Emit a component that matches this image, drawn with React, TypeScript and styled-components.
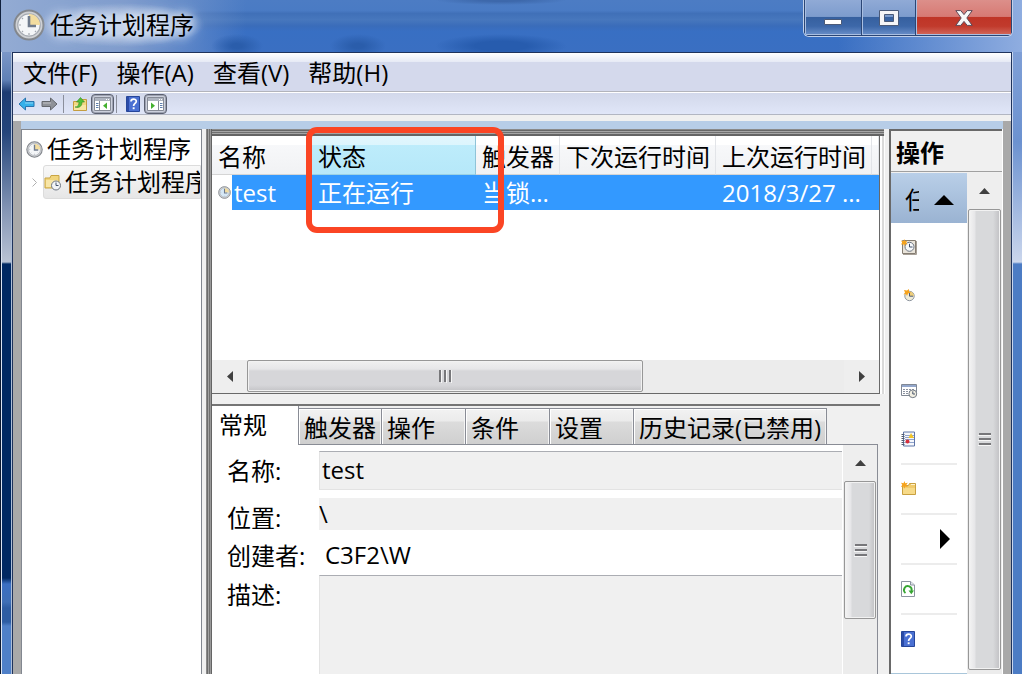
import React from "react";
import styled, { createGlobalStyle, css } from "styled-components";

const GlobalStyle = createGlobalStyle`
  * { box-sizing: border-box; }
  html, body { margin: 0; height: 100%; overflow: hidden; }
  body, button, input, textarea, table {
    font-family: "Open Sans", "Noto Sans CJK SC", sans-serif;
    font-size: 24px;
    line-height: 32px;
    color: #000;
  }
  button { border: 0; padding: 0; background: none; text-align: left; }
  svg { display: block; flex: none; }
`;

/* ---------- window frame ---------- */

const Window = styled.div`
  display: grid;
  grid-template: 52px 1fr / 12px 1fr 10px;
  height: 100vh;
  overflow: hidden;
  background: #4577c0;
`;

const TitleBar = styled.header`
  grid-column: 1 / -1;
  display: flex;
  justify-content: space-between;
  align-items: flex-start;
  padding: 0 9px 0 12px;
  border-left: 1px solid #10203c;
  background:
    radial-gradient(ellipse 84px 22px at 120px 25px, #b9c9e4 40%, transparent),
    radial-gradient(ellipse 26px 12px at 236px 46px, #2a5dab 20%, transparent),
    radial-gradient(ellipse 28px 12px at 357px 46px, #2a5dab 20%, transparent),
    radial-gradient(ellipse 66px 12px at 500px 46px, #275cae 40%, transparent),
    radial-gradient(ellipse 66px 5px at 500px 0, #3d68ab 30%, transparent),
    linear-gradient(90deg, transparent 82%, #8fade0 100%),
    linear-gradient(90deg, #93abd3 0, #7f9ccd 12%, transparent 24%),
    linear-gradient(#4c7cc4 0, #4a7bc4 20%, #4070b8 26%, #4777bd 38%, #3a6cba 50%, #386fc3 60%, #3a6fc2 100%);
`;

const Title = styled.h1`
  display: flex;
  align-items: center;
  gap: 5px;
  margin: 9px 0 0 0;
  height: 32px;
  font-size: 24px;
  font-weight: 400;
  text-shadow: 0 0 8px #dfe8f6, 0 0 12px #dfe8f6, 0 0 16px #c8d8f0;
`;

const Controls = styled.div`
  display: flex;
  height: 37px;
  border: 1px solid #c2d1ea;
  border-top: 0;
  border-radius: 0 0 6px 6px;
  box-shadow: inset 0 0 0 1px #203a68;
  overflow: hidden;
`;

const ControlButton = styled.button<{ $wide?: boolean; $close?: boolean }>`
  display: flex;
  justify-content: center;
  align-items: center;
  width: ${(p) => (p.$close ? 96 : p.$wide ? 58 : 54)}px;
  border: 1px solid #2b4676;
  border-top: 0;
  border-left: ${(p) => (p.$wide ? "1px solid #2b4676" : "0")};
  box-shadow: inset 1px -1px 0 #a9bfe2;
  background: ${(p) =>
    p.$close
      ? "linear-gradient(#dc8f8a 0, #d77a74 47%, #bf3527 50%, #c13a2c 75%, #d2695c 100%)"
      : "linear-gradient(#90aad6 0, #7d9ccd 47%, #36609f 50%, #3d68a9 75%, #6a8fc9 100%)"};
`;

const LeftEdge = styled.div`
  border-left: 1px solid #0b1830;
  box-shadow: inset 1px 0 0 #dbe4f2, inset -1px 0 0 #aebfd8;
  background: linear-gradient(#7b97c8 0, #5f80b5 28px, #1d3c72 40px, #24457b 80px, #8697b6 160px, #b9c3d4 210px,
    #002862 212px, #002862 526px, #3b6fc2 532px, #3f6fb6 550px, #2e5da3 556px, #2e5da3 570px, #4f80c8 574px);
`;

const RightEdge = styled.div`
  box-shadow: inset 1px 0 0 #c8d6ee;
  background: linear-gradient(#7f9fd6 0, #6c92d0 90px, #c9d5ec 208px, #d0daee 210px, #4c7cc4 212px);
`;

const Client = styled.main`
  display: flex;
  flex-direction: column;
  min-width: 0;
  min-height: 0;
  border: 1px solid #1f335c;
  border-bottom: 0;
  background: #f0f0f0;
`;

/* ---------- menu and toolbar ---------- */

const MenuBar = styled.nav`
  display: flex;
  gap: 19px;
  height: 39px;
  padding: 4px 10px 0;
  border-bottom: 1px solid #b2b4bb;
  background: linear-gradient(#fff 0, #e6eaf5 9px, #d4d9ec 9px);
`;

const MenuItem = styled.button`
  display: block;
  height: 32px;
  white-space: nowrap;
`;

const ToolBar = styled.div`
  display: flex;
  align-items: center;
  height: 23px;
  padding-left: 2px;
  border-top: 1px solid #fff;
  border-bottom: 1px solid #b2b6c2;
  background: linear-gradient(#d2d8ea, #e0e6f8);
`;

const ToolButton = styled.button<{ $pressed?: boolean }>`
  display: flex;
  align-items: center;
  justify-content: center;
  width: 23px;
  height: 20px;
  ${(p) =>
    p.$pressed &&
    css`
      border: 1px solid #5b6070;
      border-radius: 4px;
      background: #ccd0dc;
      box-shadow: inset 0 0 0 1px #9ea3b2;
    `}
`;

const ToolDivider = styled.span`
  width: 1px;
  height: 18px;
  margin: 0 4px 0 2px;
  background: #8b8f9b;
`;

/* ---------- body ---------- */

const Body = styled.div`
  flex: 1;
  min-height: 0;
  display: grid;
  grid-template: 8px 1fr / 181px 4px minmax(0, 1fr) 114px;
  margin-top: 6px;
  border: solid #a9a9a9;
  border-width: 0 8px;
`;

const BlueStrip = styled.div`
  grid-column: 1 / -1;
  background: #b7cde7;
`;

const TreePane = styled.aside`
  grid-column: 1;
  border: 1px solid #828790;
  border-bottom: 0;
  padding: 3px 0 0 4px;
  background: #fff;
  overflow: hidden;
`;

const TreeRoot = styled.div`
  display: flex;
  align-items: center;
  gap: 4px;
  height: 32px;
  white-space: nowrap;
`;

const TreeChild = styled.div`
  display: flex;
  align-items: center;
  height: 34px;
  white-space: nowrap;
`;

const Expander = styled.span`
  display: flex;
  justify-content: center;
  width: 17px;
`;

const TreeItem = styled.button`
  display: flex;
  align-items: center;
  gap: 4px;
  flex: none;
  width: 158px;
  height: 34px;
  border: 1px solid #dcdcdc;
  border-radius: 3px 0 0 3px;
  background: linear-gradient(#f8f8f8, #e6e6e6);
  overflow: hidden;
  white-space: nowrap;
`;

const Center = styled.section`
  grid-column: 3;
  position: relative;
  display: flex;
  flex-direction: column;
  min-height: 0;
  padding-left: 6px;
  background: linear-gradient(90deg, #8a8a8a 1px, #6c6c6c 1px, #6c6c6c 2px, #a2a2a2 2px, #a2a2a2 3px, #707070 3px,
    #707070 4px, #999 4px, #999 5px, #646464 5px, #646464 6px, #f0f0f0 6px);
`;

const TopFrame = styled.div`
  flex: none;
  height: 7px;
  margin-right: 5px;
  background: linear-gradient(#8a8a8a 1px, #666 1px, #666 2px, #a5a5a5 2px, #a5a5a5 3px, #707070 3px, #707070 4px,
    #a5a5a5 4px, #a5a5a5 5px, #646464 5px);
`;

const ListPane = styled.div`
  flex: 0 0 258px;
  display: flex;
  flex-direction: column;
  margin-right: 9px;
  border: solid #696969;
  border-width: 0 1px 1px 0;
  background: #fff;
  box-shadow: 2px 0 0 #fff, 4px 0 0 #dadada, 5px 0 0 #fff;
`;

const TableArea = styled.div`
  flex: 1;
  overflow: hidden;
`;

const Table = styled.table`
  width: 100%;
  table-layout: fixed;
  border-collapse: separate;
  border-spacing: 0;
`;

const HeadCell = styled.th<{ $width?: number; $active?: boolean }>`
  width: ${(p) => (p.$width ? `${p.$width}px` : "auto")};
  height: 39px;
  padding: 4px 0 0 6px;
  font-weight: 400;
  text-align: left;
  white-space: nowrap;
  border-right: 1px solid ${(p) => (p.$active ? "#8fc4d8" : "#e2e4e8")};
  border-bottom: 1px solid ${(p) => (p.$active ? "#9bd2e4" : "#d5d5d5")};
  background: ${(p) =>
    p.$active
      ? "linear-gradient(#e2f6fd 0, #dcf5fd 9px, #bdecfb 9px, #b6e8f9 100%)"
      : "linear-gradient(#fff 0, #fff 9px, #f7f8fa 9px, #f1f2f4 100%)"};
`;

const Cell = styled.td`
  height: 35px;
  padding: 0 0 0 6px;
  color: #fff;
  white-space: nowrap;
  background: #3399ff;
`;

const NameCell = styled(Cell)`
  background: linear-gradient(90deg, #fff 20px, #3399ff 20px);
`;

const TaskName = styled.span`
  display: flex;
  align-items: center;
  gap: 3px;
`;

const HScroll = styled.div`
  display: flex;
  height: 33px;
  background: #ececec;
`;

const VScroll = styled.div<{ $width: number }>`
  flex: none;
  display: flex;
  flex-direction: column;
  width: ${(p) => p.$width}px;
  background: #ececec;
`;

const ScrollButton = styled.button<{ $end?: boolean; $size?: number }>`
  display: flex;
  align-items: center;
  justify-content: center;
  flex: 0 0 ${(p) => p.$size ?? 36}px;
  background: #eee;
  ${(p) => p.$end && "margin-left: auto;"}
`;

const HThumb = styled.div`
  display: flex;
  align-items: center;
  justify-content: center;
  width: 396px;
  margin-bottom: 1px;
  border: 1px solid #979797;
  border-radius: 2px;
  box-shadow: inset 0 0 0 1px #f2f2f2;
  background: linear-gradient(#f0f0f0 0, #e6e6e8 8px, #d6d6d9 10px, #d6d6d9 24px, #c4c4c7 100%);
`;

const VThumb = styled.div<{ $height?: number }>`
  display: flex;
  align-items: center;
  justify-content: center;
  flex: ${(p) => (p.$height ? `0 0 ${p.$height}px` : "1")};
  margin: 0 1px;
  border: 1px solid #979797;
  border-radius: 2px;
  box-shadow: inset 0 0 0 1px #f2f2f2;
  background: linear-gradient(90deg, #f4f4f4 0, #e6e6e8 6px, #d8d9db 7px, #d8d9db 24px, #c0c0c3 100%);
`;

const Highlight = styled.div`
  position: absolute;
  left: 100px;
  top: -2px;
  width: 198px;
  height: 106px;
  border: 6px solid #fb4524;
  border-radius: 11px;
  pointer-events: none;
`;

/* ---------- details ---------- */

const Details = styled.div`
  flex: 1;
  display: flex;
  flex-direction: column;
  min-height: 0;
  margin: 10px 9px 0 0;
  border-top: 2px solid #757575;
  background: #f0f0f0;
`;

const Tabs = styled.div`
  display: flex;
  align-items: flex-end;
  flex: none;
  height: 39px;
  margin-right: 2px;
  background: linear-gradient(#f0f0f0 38px, #898c95 38px);
`;

const Tab = styled.button<{ $width: number; $selected?: boolean }>`
  flex: 0 0 ${(p) => p.$width}px;
  height: 37px;
  padding: 2px 0 0 5px;
  white-space: nowrap;
  border: 1px solid #898c95;
  border-left-width: 0;
  box-shadow: inset 1px 1px 0 #fff, inset -1px 0 0 #f4f4f4;
  background: linear-gradient(#f2f2f2 0, #ebebeb 12px, #dcdcdc 13px, #cfcfcf 100%);
  ${(p) =>
    p.$selected &&
    css`
      height: 39px;
      padding: 0 0 2px 7px;
      border-width: 0 1px 0 0;
      box-shadow: none;
      background: #fff;
    `}
`;

const TabPanel = styled.div`
  flex: 1;
  display: flex;
  min-height: 0;
  margin-right: 2px;
  border-right: 1px solid #898c95;
  background: #fff;
`;

const Form = styled.div`
  flex: 1;
  min-width: 0;
  display: grid;
  grid-template: 39px 40px 45px 1fr / 92px minmax(0, 1fr);
  padding: 6px 1px 0 15px;
`;

const Label = styled.label<{ $top?: number }>`
  padding-top: ${(p) => p.$top ?? 4}px;
  white-space: nowrap;
`;

const field = css`
  width: 100%;
  min-width: 0;
  border: 0;
  border-radius: 0;
  outline: 0;
  background: #f0f0f0;
`;

const Input = styled.input<{ $kind: "boxed" | "flat" | "plain" }>`
  ${field}
  ${(p) =>
    p.$kind === "boxed" &&
    css`
      padding: 0 2px 2px;
      border: 1px solid #e3e3e3;
      border-top-color: #abadb3;
      border-right: 0;
    `}
  ${(p) =>
    p.$kind === "flat" &&
    css`
      height: 32px;
      margin-top: 8px;
      padding: 0;
    `}
  ${(p) =>
    p.$kind === "plain" &&
    css`
      height: 44px;
      padding: 4px 6px 0;
      background: #fff;
    `}
`;

const TextArea = styled.textarea`
  ${field}
  display: block;
  height: 100%;
  resize: none;
  border-top: 1px solid #abadb3;
  border-left: 1px solid #e3e3e3;
`;

/* ---------- actions ---------- */

const Actions = styled.aside`
  grid-column: 4;
  display: flex;
  flex-direction: column;
  min-height: 0;
  margin-right: 1px;
  border: solid #696969;
  border-width: 2px 0 0 2px;
  box-shadow: 1px 0 0 #fff;
`;

const ActionsTitle = styled.h2`
  flex: none;
  margin: 0;
  height: 41px;
  padding: 6px 0 0 5px;
  border-bottom: 1px solid #a0a0a0;
  font-size: 24px;
  font-weight: 700;
`;

const ActionsBody = styled.div`
  flex: 1;
  display: flex;
  min-height: 0;
  padding-top: 1px;
`;

const ActionList = styled.div`
  flex: 1;
  min-width: 0;
  overflow: hidden;
  background: #fff;
`;

const ActionGroup = styled.button`
  display: flex;
  align-items: center;
  justify-content: space-between;
  width: 100%;
  height: 50px;
  padding: 4px 13px 0 14px;
  background: linear-gradient(#b9cfe8, #9ab3d2);
`;

const ClippedText = styled.span`
  width: 14px;
  overflow: hidden;
  white-space: nowrap;
`;

const Action = styled.button<{ $end?: boolean }>`
  display: flex;
  align-items: center;
  justify-content: ${(p) => (p.$end ? "flex-end" : "flex-start")};
  width: 100%;
  height: 48px;
  padding: 0 17px 0 10px;
`;

const ActionDivider = styled.hr`
  height: 2px;
  margin: 0 10px;
  border: 0;
  background: #ececec;
`;

const NextGroup = styled.div`
  height: 12px;
  margin-top: 10px;
  background: #a9c6da;
`;

/* ---------- drawings ---------- */

const Clock = ({ size, face = "#f4f6f8" }: { size: number; face?: string }) => (
  <svg width={size} height={size} viewBox="0 0 32 32">
    <circle cx="16" cy="16" r="14.5" fill="#cfd1d4" stroke="#83878d" strokeWidth="2" />
    <circle cx="16" cy="16" r="11.2" fill={face} stroke="#a3a8b0" strokeWidth="1.2" />
    <path d="M16 16V5a11 11 0 0 1 11 11z" fill="#f3dda0" />
    <path d="M16 7v10h7" fill="none" stroke="#6f7b8d" strokeWidth="2.600" />
    <path d="M16 26v-2M6 16h2M9 9l1 1M9 23l1-1M23 23l-1-1" stroke="#a3a8b0" strokeWidth="1.200" />
  </svg>
);

const Arrow = ({ fill, edge, flip }: { fill: string; edge: string; flip?: boolean }) => (
  <svg width="17" height="14" viewBox="0 0 17 14">
    <path
      d={flip ? "M16 7 9.500 1v3.500H1v5h8.500V13z" : "M1 7l6.500-6v3.500H16v5H7.500V13z"}
      fill={fill}
      stroke={edge}
      strokeLinejoin="round"
    />
    <path d={flip ? "M2 6h8" : "M7 6h8"} stroke="#fff" strokeOpacity=".45" />
  </svg>
);

const UpFolder = () => (
  <svg width="16" height="16" viewBox="0 0 16 16">
    <path d="M1.500 5.500h5l1-2h7v11h-13z" fill="#f3d883" stroke="#c49d3f" />
    <path d="M2 9h12v5H2z" fill="#f8e6a5" />
    <path d="M3 11c3 0 4-2 4-5H4.500L8.500 1.500 12.500 6H10c0 4-2.500 6.500-7 5z" fill="#55bf38" stroke="#2f8a22" strokeWidth=".6" />
  </svg>
);

const PaneIcon = ({ right }: { right?: boolean }) => (
  <svg width="17" height="14" viewBox="0 0 17 14">
    <path d="M.5.5h16v13H.5z" fill="#fff" stroke="#868b96" />
    <path d="M1 1h15v3H1z" fill="#aeb4c0" />
    <path d="M12 2.500h1M14 2.500h1" stroke="#fff" />
    <path d={right ? "M11.500 4v9" : "M5.500 4v9"} stroke="#868b96" />
    <path d={right ? "M13 6.500h2.500M13 8.500h2.500M13 10.500h2.500" : "M2 6.500h2.500M2 8.500h2.500M2 10.500h2.500"} stroke="#5e7fae" />
    <path d={right ? "M4 5.500v6.500l4-3.200z" : "M13 5.500v6.500L9 8.800z"} fill="#44b02f" />
  </svg>
);

const HelpIcon = () => (
  <svg width="14" height="16" viewBox="0 0 14 16">
    <path d="M.5.5h13v15H.5z" fill="#4a70d2" stroke="#26469a" />
    <path d="M1 1h2v14H1z" fill="#2a4ba8" />
    <path d="M5 5.500C5 2.500 10.300 2.300 10.300 5.300 10.300 7.500 7.600 7.500 7.600 10" fill="none" stroke="#fff" strokeWidth="1.700" />
    <path d="M6.700 11.300h1.900v1.900H6.700z" fill="#fff" />
  </svg>
);

const FolderClock = () => (
  <svg width="17" height="17" viewBox="0 0 17 17">
    <path d="M1 4h5l1-2.500h8V14H1z" fill="#f1d57c" stroke="#c9a544" />
    <path d="M2 6h12v7H2z" fill="#f8e6a8" />
    <circle cx="12" cy="11.500" r="4.500" fill="#f2f4f7" stroke="#6e7682" />
    <path d="M12 8.500v3h2.500" fill="none" stroke="#46556d" />
  </svg>
);

const StarPath = ({ d = "M4 0l1 2.700 3-.7-1.600 2.400L8 7 5 6.500 4 9 3 6.500 0 7l1.500-2.500L0 2l3 .7z" }) => (
  <path d={d} fill="#f6a31c" />
);

const CreateBasic = () => (
  <svg width="16" height="16" viewBox="0 0 16 16">
    <path d="M1.500 1.500h13v13h-13z" fill="#e9e4da" stroke="#857d72" />
    <path d="M2 15.500h13.500V2" fill="none" stroke="#a7a097" />
    <circle cx="8.500" cy="7.800" r="4.500" fill="#f7f9fb" stroke="#6e7682" />
    <path d="M8.500 4.800v3.200h3" fill="none" stroke="#3f4f69" />
    <g transform="scale(.8)"><StarPath /></g>
  </svg>
);

const CreateTask = () => (
  <svg width="15" height="16" viewBox="0 0 15 16">
    <circle cx="8.500" cy="9" r="4.700" fill="#f0ecd8" stroke="#8d95a0" />
    <path d="M8.500 4.500A4.500 4.500 0 0 1 13 9H8.500z" fill="#efcf7c" />
    <path d="M8.500 6v3.200H12" fill="none" stroke="#4c5a72" />
    <StarPath d="M3 3l3 .5L8 2v2.500l2 1-3 1L6 9 5 7 2.500 7.500 4 5.500z" />
  </svg>
);

const RunningTasks = () => (
  <svg width="17" height="16" viewBox="0 0 17 16">
    <path d="M.5 1.500h15v11H.5z" fill="#fff" stroke="#818894" />
    <path d="M1 2h14v2H1z" fill="#93a7cc" />
    <path d="M2 6.500h11M2 8.500h7M2 10.500h6" stroke="#8b92a0" strokeDasharray="2 1" />
    <circle cx="11.800" cy="10.800" r="3.900" fill="#f2efe2" stroke="#757d88" />
    <path d="M11.800 8.300v2.700h2.200" fill="none" stroke="#45536b" />
  </svg>
);

const HistoryBook = () => (
  <svg width="15" height="16" viewBox="0 0 15 16">
    <path d="M2.500 1h11v14h-11z" fill="#f5f7fc" stroke="#5f76a8" />
    <path d="M4 4.500h9M4 6.500h9M4 8.500h9M4 11.500h9" stroke="#8fa3cc" />
    <path d="M.5 3.500h3M.5 5.500h3M.5 7.500h3M.5 9.500h3M.5 11.500h3M.5 13.500h3" stroke="#525b6e" />
    <path d="M10 2l3 5H7.500z" fill="#f2c529" />
    <circle cx="6.500" cy="10.500" r="2" fill="#d62f3c" />
  </svg>
);

const NewFolder = () => (
  <svg width="16" height="16" viewBox="0 0 16 16">
    <path d="M1.500 4.500h6l1-2h6v11h-13z" fill="#f1cb6c" stroke="#c9a040" />
    <path d="M2 7h12v6H2z" fill="#f7da88" />
    <path d="M10 3.500h4" stroke="#fff3cf" />
    <g transform="scale(.85)"><StarPath /></g>
  </svg>
);

const RefreshIcon = () => (
  <svg width="14" height="16" viewBox="0 0 14 16">
    <path d="M.5.5h9l4 3.500v11.500H.5z" fill="#fff" stroke="#8c94a0" />
    <path d="M9.500.5V4h4" fill="#e1e5ec" stroke="#8c94a0" />
    <path d="M4.500 12A3.800 3.800 0 1 1 10.500 10" fill="none" stroke="#37a532" strokeWidth="1.900" />
    <path d="M7.500 9.500h5.500l-2.700 3.800z" fill="#37a532" />
  </svg>
);

const Triangle = ({ dir, w, h, fill = "#404040" }: { dir: "up" | "left" | "right"; w: number; h: number; fill?: string }) => {
  const d = { up: `M0 ${h}L${w / 2} 0L${w} ${h}z`, left: `M${w} 0V${h}L0 ${h / 2}z`, right: `M0 0V${h}L${w} ${h / 2}z` }[dir];
  return (
    <svg width={w} height={h} viewBox={`0 0 ${w} ${h}`}>
      <path d={d} fill={fill} />
    </svg>
  );
};

const Grip = ({ vertical }: { vertical?: boolean }) => (
  <svg width="15" height="15" viewBox="0 0 15 15">
    <g transform={vertical ? "rotate(90 7.500 7.500)" : undefined}>
      <path d="M2 1v12M7 1v12M12 1v12" stroke="#77777a" strokeWidth="2" />
      <path d="M3.500 1v13M8.500 1v13M13.500 1v13" stroke="#f6f6f6" />
    </g>
  </svg>
);

const columns = [
  { name: "名称", width: 100 },
  { name: "状态", width: 164, active: true },
  { name: "触发器", width: 84 },
  { name: "下次运行时间", width: 156 },
  { name: "上次运行时间", width: 156 },
];

const tabs = [
  { name: "常规", width: 87, selected: true },
  { name: "触发器", width: 83 },
  { name: "操作", width: 84 },
  { name: "条件", width: 84 },
  { name: "设置", width: 84 },
  { name: "历史记录(已禁用)", width: 193 },
];

export default function App() {
  return (
    <>
      <GlobalStyle />
      <Window>
        <TitleBar>
          <Title>
            <Clock size={32} />
            任务计划程序
          </Title>
          <Controls>
            <ControlButton $wide aria-label="最小化">
              <svg width="18" height="30" viewBox="0 0 18 30">
                <path d="M.5 16.500h17v5H.5z" fill="#fff" stroke="#4b5a78" />
              </svg>
            </ControlButton>
            <ControlButton aria-label="最大化">
              <svg width="20" height="16" viewBox="0 0 20 16">
                <path d="M.5.5h19v15H.5zM5.500 4.500v7h9v-7z" fill="#f5f5f7" fillRule="evenodd" stroke="#4b5a78" />
              </svg>
            </ControlButton>
            <ControlButton $close aria-label="关闭">
              <svg width="18" height="16" viewBox="0 0 18 16">
                <path d="M.8.6h5L9 4.600 12.200.6h5L11.800 8l5.400 7.400h-5L9 11.400l-3.200 4h-5L6.200 8z" fill="#f7f7f7" stroke="#5d4a58" />
              </svg>
            </ControlButton>
          </Controls>
        </TitleBar>
        <LeftEdge />
        <Client>
          <MenuBar>
            <MenuItem>文件(F)</MenuItem>
            <MenuItem>操作(A)</MenuItem>
            <MenuItem>查看(V)</MenuItem>
            <MenuItem>帮助(H)</MenuItem>
          </MenuBar>
          <ToolBar>
            <ToolButton aria-label="后退"><Arrow fill="#35b1ea" edge="#2a74ae" /></ToolButton>
            <ToolButton aria-label="前进"><Arrow fill="#8f9298" edge="#64676d" flip /></ToolButton>
            <ToolDivider />
            <ToolButton aria-label="向上"><UpFolder /></ToolButton>
            <ToolButton $pressed aria-label="显示控制台树"><PaneIcon /></ToolButton>
            <ToolDivider />
            <ToolButton aria-label="帮助"><HelpIcon /></ToolButton>
            <ToolButton $pressed aria-label="显示操作窗格"><PaneIcon right /></ToolButton>
          </ToolBar>
          <Body>
            <BlueStrip />
            <TreePane>
              <TreeRoot>
                <Clock size={17} />
                任务计划程序
              </TreeRoot>
              <TreeChild>
                <Expander>
                  <svg width="5" height="9" viewBox="0 0 5 9">
                    <path d="M.5.5l4 4-4 4" fill="none" stroke="#b0b0b0" />
                  </svg>
                </Expander>
                <TreeItem>
                  <FolderClock />
                  任务计划程序
                </TreeItem>
              </TreeChild>
            </TreePane>
            <Center>
              <TopFrame />
              <ListPane>
                <TableArea>
                  <Table>
                    <thead>
                      <tr>
                        {columns.map((c) => (
                          <HeadCell key={c.name} $width={c.width} $active={c.active}>{c.name}</HeadCell>
                        ))}
                        <HeadCell />
                      </tr>
                    </thead>
                    <tbody>
                      <tr>
                        <NameCell>
                          <TaskName>
                            <Clock size={13} face="#d6e8f6" />
                            test
                          </TaskName>
                        </NameCell>
                        <Cell>正在运行</Cell>
                        <Cell>当锁...</Cell>
                        <Cell />
                        <Cell>2018/3/27 ...</Cell>
                        <Cell />
                      </tr>
                    </tbody>
                  </Table>
                </TableArea>
                <HScroll>
                  <ScrollButton $size={35} aria-label="向左滚动"><Triangle dir="left" w={6} h={11} /></ScrollButton>
                  <HThumb><Grip /></HThumb>
                  <ScrollButton $end $size={35} aria-label="向右滚动"><Triangle dir="right" w={6} h={11} /></ScrollButton>
                </HScroll>
              </ListPane>
              <Details>
                <Tabs role="tablist">
                  {tabs.map((t) => (
                    <Tab key={t.name} role="tab" aria-selected={!!t.selected} $width={t.width} $selected={t.selected}>
                      {t.name}
                    </Tab>
                  ))}
                </Tabs>
                <TabPanel role="tabpanel">
                  <Form>
                    <Label htmlFor="task-name">名称:</Label>
                    <Input id="task-name" $kind="boxed" defaultValue="test" readOnly />
                    <Label htmlFor="task-location" $top={12}>位置:</Label>
                    <Input id="task-location" $kind="flat" defaultValue={"\\"} readOnly />
                    <Label htmlFor="task-author" $top={10}>创建者:</Label>
                    <Input id="task-author" $kind="plain" defaultValue={"C3F2\\W"} readOnly />
                    <Label htmlFor="task-description">描述:</Label>
                    <TextArea id="task-description" readOnly />
                  </Form>
                  <VScroll $width={34}>
                    <ScrollButton aria-label="向上滚动"><Triangle dir="up" w={11} h={6} /></ScrollButton>
                    <VThumb $height={138}><Grip vertical /></VThumb>
                  </VScroll>
                </TabPanel>
              </Details>
              <Highlight />
            </Center>
            <Actions>
              <ActionsTitle>操作</ActionsTitle>
              <ActionsBody>
                <ActionList>
                  <ActionGroup>
                    <ClippedText>任</ClippedText>
                    <Triangle dir="up" w={20} h={10} fill="#000" />
                  </ActionGroup>
                  <Action aria-label="创建基本任务"><CreateBasic /></Action>
                  <Action aria-label="创建任务"><CreateTask /></Action>
                  <Action aria-label="导入任务" />
                  <Action aria-label="显示所有正在运行的任务"><RunningTasks /></Action>
                  <Action aria-label="启用所有任务历史记录"><HistoryBook /></Action>
                  <ActionDivider />
                  <Action aria-label="新文件夹"><NewFolder /></Action>
                  <ActionDivider />
                  <Action $end aria-label="查看"><Triangle dir="right" w={10} h={20} fill="#000" /></Action>
                  <ActionDivider />
                  <Action aria-label="刷新"><RefreshIcon /></Action>
                  <ActionDivider />
                  <Action aria-label="帮助"><HelpIcon /></Action>
                  <NextGroup />
                </ActionList>
                <VScroll $width={35}>
                  <ScrollButton aria-label="向上滚动"><Triangle dir="up" w={11} h={6} /></ScrollButton>
                  <VThumb><Grip vertical /></VThumb>
                  <div style={{ height: 4 }} />
                </VScroll>
              </ActionsBody>
            </Actions>
          </Body>
        </Client>
        <RightEdge />
      </Window>
    </>
  );
}
